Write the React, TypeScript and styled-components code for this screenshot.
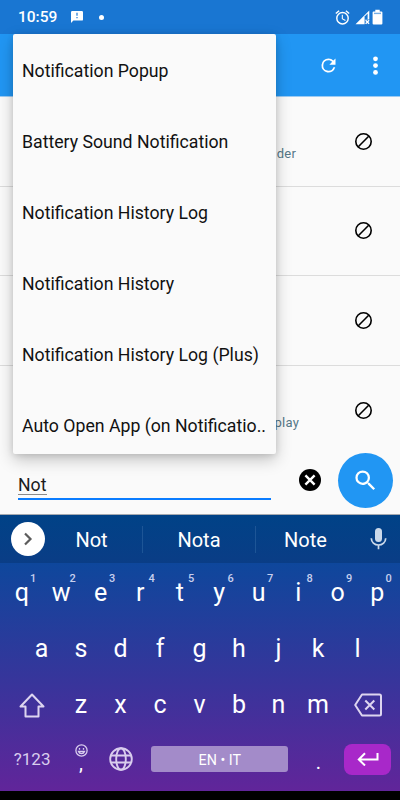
import React from "react";
import styled, { createGlobalStyle } from "styled-components";

const GlobalStyle = createGlobalStyle`
  * { box-sizing: border-box; }
  body { margin: 0; background: #000; font-family: Roboto, "Liberation Sans", sans-serif; }
  svg { display: block; }
`;

const Screen = styled.div`
  position: relative;
  width: 400px;
  height: 800px;
  display: flex;
  flex-direction: column;
  overflow: hidden;
  background: #000;
`;

const StatusBar = styled.header`
  height: 34px;
  flex: none;
  display: flex;
  align-items: center;
  padding: 0 16px 0 18px;
  background: #1976d2;
  color: #fff;
`;

const Clock = styled.span`
  width: 53px;
  font-size: 15.5px;
  font-weight: 500;
  line-height: 35px;
`;

const Dot = styled.span`
  width: 5px;
  height: 5px;
  margin-left: 16px;
  border-radius: 50%;
  background: #fff;
`;

const StatusIcons = styled.div`
  display: flex;
  align-items: center;
  margin-left: auto;
`;

const SignalSlot = styled.span`
  margin-left: 5px;
`;

const AppBar = styled.div`
  height: 63px;
  flex: none;
  display: flex;
  align-items: center;
  justify-content: flex-end;
  gap: 26px;
  padding: 0 14px 0 0;
  background: #2196f3;
  border-bottom: 1px solid #9ccbf3;
  color: #fff;
`;

const List = styled.main`
  height: 358px;
  flex: none;
  overflow: hidden;
  background: #fafafa;
`;

const ListRow = styled.div`
  height: 89.6px;
  display: flex;
  align-items: center;
  justify-content: space-between;
  padding: 0 27px 0 0;
  border-bottom: 1px solid #dcdcdc;

  &:last-child {
    border-bottom-color: transparent;
  }
`;

const RowCaption = styled.span<{ $end: number }>`
  width: ${(p) => p.$end}px;
  padding-top: 25px;
  text-align: right;
  font-size: 13px;
  letter-spacing: 0.2px;
  color: #557888;
`;

const SearchArea = styled.div`
  height: 60px;
  flex: none;
  display: flex;
  align-items: flex-start;
  padding: 0 7px 0 18px;
  background: #fafafa;
  border-bottom: 1px solid #a5a9b0;
`;

const Field = styled.div`
  width: 253px;
  height: 45px;
  padding-top: 19px;
  border-bottom: 2px solid #0a7cff;
  font-size: 17.7px;
  line-height: 22px;
  color: #1b1b1b;
`;

const Typed = styled.span`
  display: inline-block;
  height: 20px;
  line-height: 21px;
  border-bottom: 1px solid #8b8b8b;
`;

const ClearButton = styled.div`
  margin: 14px 0 0 28px;
`;

const SearchButton = styled.div`
  width: 55px;
  height: 55px;
  margin: -2px 0 0 auto;
  display: grid;
  place-items: center;
  border-radius: 50%;
  background: #2196f3;
`;

const Popup = styled.ul`
  position: absolute;
  left: 13px;
  top: 34px;
  width: 262.5px;
  height: 420px;
  margin: 0;
  padding: 2px 0 0;
  overflow: hidden;
  list-style: none;
  border-radius: 2px;
  background: #fafafa;
  box-shadow: 0 6px 16px rgba(0, 0, 0, 0.22), 0 1px 6px rgba(0, 0, 0, 0.12);
`;

const PopupItem = styled.li`
  height: 71px;
  padding-left: 9px;
  line-height: 71px;
  font-size: 17.7px;
  white-space: nowrap;
  color: #111;
`;

const Keyboard = styled.section`
  height: 276px;
  flex: none;
  display: flex;
  flex-direction: column;
  background: linear-gradient(#05489a 0, #0e479c 48px, #39349b 62%, #61259a 100%);
  color: #fff;
`;

const Suggestions = styled.div`
  height: 48px;
  flex: none;
  display: flex;
  align-items: center;
  padding-left: 11px;
  background: linear-gradient(#004287, #0a3d86);
`;

const Expand = styled.div`
  width: 34px;
  height: 34px;
  margin-right: -4px;
  display: grid;
  place-items: center;
  border-radius: 50%;
  background: #fff;
`;

const Suggestion = styled.span<{ $width: number; $divided?: boolean }>`
  width: ${(p) => p.$width}px;
  height: 27px;
  line-height: 28px;
  text-align: center;
  font-size: 20px;
  border-right: 1px solid ${(p) => (p.$divided ? "#1d5596" : "transparent")};
`;

const MicSlot = styled.div`
  margin-left: 14px;
  margin-top: -2px;
`;

const KeyRow = styled.div<{ $inset: number }>`
  height: 56px;
  flex: none;
  display: flex;
  padding: 0 ${(p) => p.$inset}px;
`;

const Key = styled.div<{ $wide?: boolean }>`
  position: relative;
  width: ${(p) => (p.$wide ? 59.25 : 39.5)}px;
  height: 56px;
  flex: none;
  display: flex;
  align-items: center;
  justify-content: center;
  font-size: 25px;
  line-height: 56px;
`;

const Letter = styled(Key)`
  padding: 3px 1px 0 0;
`;

const IconKey = styled(Key)`
  padding-top: 4px;
`;

const Hint = styled.sup`
  position: absolute;
  left: 27.5px;
  top: 9px;
  font-size: 11px;
  line-height: 14px;
  font-weight: 500;
  color: #c8d0ee;
`;

const ModeKey = styled(Key)`
  font-size: 17px;
  color: #d9cdee;
`;

const CommaKey = styled(Key)`
  flex-direction: column;
  justify-content: flex-start;
  padding: 13px 1px 0 0;
  font-size: 20px;
  line-height: 13px;
`;

const PeriodKey = styled(Key)`
  font-size: 20px;
  padding-top: 5px;
`;

const SpaceSlot = styled.div`
  width: 158px;
  height: 56px;
  display: grid;
  place-items: center;
`;

const SpaceBar = styled.div`
  width: 137px;
  height: 26px;
  border-radius: 3px;
  background: #a38bc9;
  text-align: center;
  font-size: 14.3px;
  line-height: 28px;
`;

const EnterKey = styled.div`
  width: 47px;
  height: 31px;
  display: grid;
  place-items: center;
  border-radius: 8px;
  background: #a828c9;
`;

const Block = () => (
  <svg width="19" height="19" viewBox="0 0 19 19" fill="none" stroke="#000" strokeWidth="1.6">
    <circle cx="9.5" cy="9.5" r="7.7" />
    <path d="M4.3 14.7 14.7 4.3" />
  </svg>
);

const suggestions = [
  { text: "Not", width: 102, divided: true },
  { text: "Nota", width: 113, divided: true },
  { text: "Note", width: 100, divided: false },
];

const captions = [
  { text: "der", end: 296 },
  { text: "", end: 296 },
  { text: "", end: 296 },
  { text: "play", end: 299 },
];

const popupItems = [
  "Notification Popup",
  "Battery Sound Notification",
  "Notification History Log",
  "Notification History",
  "Notification History Log (Plus)",
  "Auto Open App (on Notificatio..",
];

export default function App() {
  return (
    <>
      <GlobalStyle />
      <Screen>
        <StatusBar>
          <Clock>10:59</Clock>
          <svg width="12" height="12" viewBox="2 2 20 20" fill="#fff">
            <path d="M20 2H4a2 2 0 0 0-2 2v18l4-4h14a2 2 0 0 0 2-2V4a2 2 0 0 0-2-2zm-7 12h-2v-2h2v2zm0-4h-2V5h2v5z" />
          </svg>
          <Dot />
          <StatusIcons>
            <svg width="15" height="15" viewBox="1.5 1.5 21 21" fill="#fff">
              <path d="M22 5.72l-4.6-3.86-1.29 1.53 4.6 3.86L22 5.72zM7.88 3.39L6.6 1.86 2 5.71l1.29 1.53 4.59-3.85zM12.5 8H11v6l4.75 2.85.75-1.23-4-2.37V8zM12 4a9 9 0 1 0 0 18 9 9 0 0 0 0-18zm0 16a7 7 0 1 1 0-14 7 7 0 0 1 0 14z" />
            </svg>
            <SignalSlot>
              <svg width="16" height="15" viewBox="0 0 16 15">
                <path d="M14.3.6v8.8H9.6V14.3H.5z" fill="#fff" />
                <path d="M9.6 6.6 12.6 3.4V9.4H9.6z" fill="#1976d2" />
                <path d="m10.6 10.3 3.5 3.5m0-3.5-3.5 3.5" stroke="#fff" strokeWidth="1.4" />
              </svg>
            </SignalSlot>
            <svg width="13" height="16" viewBox="2 0 13 16">
              <path d="M6.3.8h4.4v1.7h1.7q1 0 1 1v11q0 1-1 1H4.6q-1 0-1-1v-11q0-1 1-1h1.7z" fill="#fff" />
              <path d="M5 4.4h7" stroke="#76aee6" strokeWidth="1.4" />
            </svg>
          </StatusIcons>
        </StatusBar>
        <AppBar>
          <svg width="21" height="21" viewBox="0 0 24 24" fill="#fff">
            <path d="M17.65 6.35A7.96 7.96 0 0 0 12 4a8 8 0 1 0 7.73 10h-2.08A6 6 0 1 1 12 6c1.66 0 3.14.69 4.22 1.78L13 11h7V4z" />
          </svg>
          <svg width="21" height="21" viewBox="0 0 21 21" fill="#fff">
            <circle cx="10.5" cy="3.8" r="2.4" />
            <circle cx="10.5" cy="10.6" r="2.4" />
            <circle cx="10.5" cy="17.4" r="2.4" />
          </svg>
        </AppBar>
        <List>
          {captions.map((c, i) => (
            <ListRow key={i}>
              <RowCaption $end={c.end}>{c.text}</RowCaption>
              <Block />
            </ListRow>
          ))}
        </List>
        <SearchArea>
          <Field>
            <Typed>Not</Typed>
          </Field>
          <ClearButton>
            <svg width="22" height="22" viewBox="0 0 22 22">
              <circle cx="11" cy="11" r="11" fill="#000" />
              <path d="m6.4 6.4 9.2 9.2m0-9.2-9.2 9.2" stroke="#fff" strokeWidth="2.4" />
            </svg>
          </ClearButton>
          <SearchButton>
            <svg width="27" height="27" viewBox="0 0 24 24" fill="#fff">
              <path d="M15.5 14h-.79l-.28-.27A6.47 6.47 0 0 0 16 9.5 6.5 6.5 0 1 0 9.5 16c1.61 0 3.09-.59 4.23-1.57l.27.28v.79l5 4.99L20.49 19zm-6 0a4.5 4.5 0 1 1 0-9 4.5 4.5 0 0 1 0 9z" />
            </svg>
          </SearchButton>
        </SearchArea>
        <Keyboard>
          <Suggestions>
            <Expand>
              <svg width="12" height="14" viewBox="0 0 12 14" fill="none" stroke="#5c5c5c" strokeWidth="2.2">
                <path d="m3 1.5 5.5 5.5L3 12.5" />
              </svg>
            </Expand>
            {suggestions.map((s) => (
              <Suggestion key={s.text} $width={s.width} $divided={s.divided}>
                {s.text}
              </Suggestion>
            ))}
            <MicSlot>
              <svg width="17" height="23" viewBox="0 0 17 23" fill="none">
                <rect x="5" y="1" width="7" height="14" rx="3.5" fill="#cbd9ea" />
                <path d="M1.3 11.2a7.2 6.8 0 0 0 14.4 0M8.5 18v4.2" stroke="#cbd9ea" strokeWidth="1.7" />
              </svg>
            </MicSlot>
          </Suggestions>
          <KeyRow $inset={2.5}>
            {"qwertyuiop".split("").map((k, i) => (
              <Letter key={k}>
                {k}
                <Hint>{(i + 1) % 10}</Hint>
              </Letter>
            ))}
          </KeyRow>
          <KeyRow $inset={22.25}>
            {"asdfghjkl".split("").map((k) => (
              <Letter key={k}>{k}</Letter>
            ))}
          </KeyRow>
          <KeyRow $inset={2.5}>
            <IconKey $wide>
              <svg width="26" height="25" viewBox="0 0 26 25" fill="none" stroke="#ddd5f0" strokeWidth="2" strokeLinejoin="round">
                <path d="M13 1.5 1.5 13.5h5V23.5h13V13.5h5z" />
              </svg>
            </IconKey>
            {"zxcvbnm".split("").map((k) => (
              <Letter key={k}>{k}</Letter>
            ))}
            <IconKey $wide>
              <svg width="28" height="24" viewBox="0 0 28 24" fill="none" stroke="#ddd5f0" strokeWidth="2" strokeLinejoin="round">
                <path d="M8 1.5h17.5q1.5 0 1.5 1.5v18q0 1.5-1.5 1.5H8L1.2 12z" />
                <path d="m11.3 7.5 9 9m0-9-9 9" />
              </svg>
            </IconKey>
          </KeyRow>
          <KeyRow $inset={2.5}>
            <ModeKey $wide>?123</ModeKey>
            <CommaKey>
              <svg width="13" height="13" viewBox="0 0 13 13" fill="none" stroke="#d9cdee" strokeWidth="1.3">
                <circle cx="6.5" cy="6.5" r="5.6" />
                <path d="M3.5 7.5a3.2 3.2 0 0 0 6 0z" />
                <path d="M4.5 3.9v1.8m4-1.8v1.8" />
              </svg>
              ,
            </CommaKey>
            <Key>
              <svg width="24" height="24" viewBox="0 0 24 24" fill="none" stroke="#d9cdee" strokeWidth="1.9">
                <circle cx="12" cy="12" r="10.8" />
                <ellipse cx="12" cy="12" rx="4.8" ry="10.8" />
                <path d="M2 8.5h20M2 15.5h20" />
              </svg>
            </Key>
            <SpaceSlot>
              <SpaceBar>EN • IT</SpaceBar>
            </SpaceSlot>
            <PeriodKey>.</PeriodKey>
            <Key $wide>
              <EnterKey>
                <svg width="22" height="14" viewBox="0 0 22 14" fill="none" stroke="#fff" strokeWidth="2">
                  <path d="M20.5 1v6.5H2M8 1.3 1.8 7.5 8 13.5" />
                </svg>
              </EnterKey>
            </Key>
          </KeyRow>
        </Keyboard>
        <Popup>
          {popupItems.map((item) => (
            <PopupItem key={item}>{item}</PopupItem>
          ))}
        </Popup>
      </Screen>
    </>
  );
}
